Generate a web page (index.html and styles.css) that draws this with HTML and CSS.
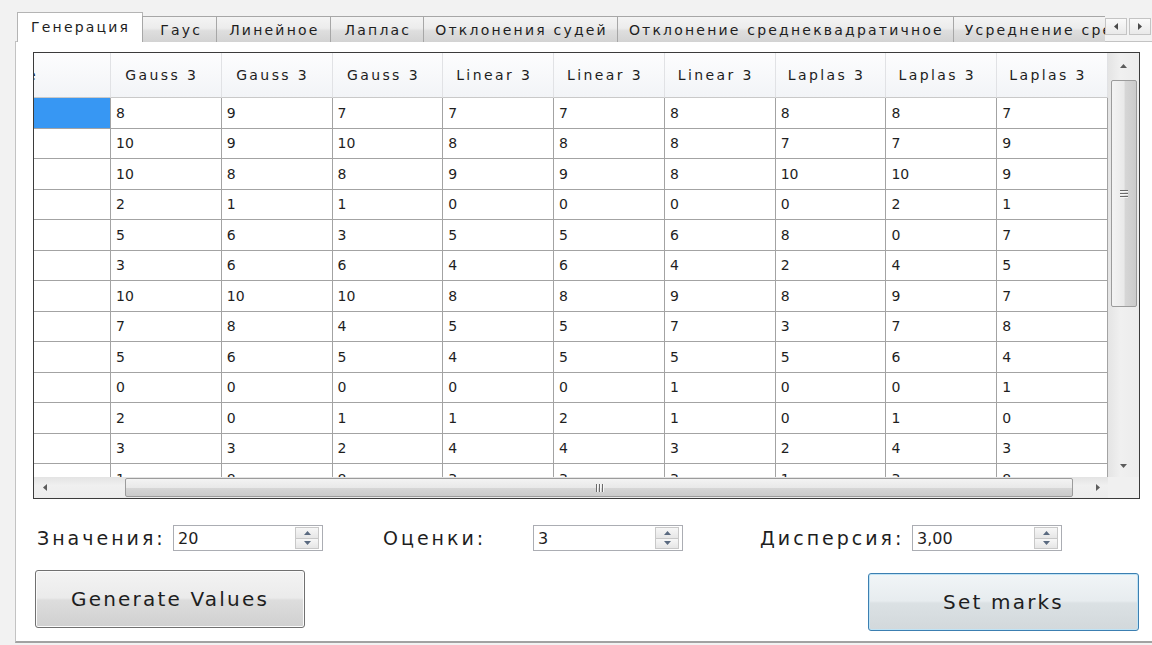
FILE: index.html
```html
<!DOCTYPE html>
<html lang="ru">
<head>
<meta charset="utf-8">
<title>Генерация оценок</title>
<link rel="stylesheet" href="styles.css">
</head>
<body>
<div class="window">
  <div class="tabbar">
    <div class="tabs">
      <div class="tab tab-active">Генерация</div>
      <div class="tab tab-pad-lg">Гаус</div>
      <div class="tab tab-pad-md">Линейное</div>
      <div class="tab tab-pad-sm">Лаплас</div>
      <div class="tab">Отклонения судей</div>
      <div class="tab">Отклонение среднеквадратичное</div>
      <div class="tab">Усреднение среднеквадратичное</div>
    </div>
    <div class="tab-scroll">
      <span class="tab-arrow"><svg width="4" height="7" viewBox="0 0 4 7"><path d="M4 0L0 3.5L4 7Z"/></svg></span>
      <span class="tab-arrow"><svg width="4" height="7" viewBox="0 0 4 7"><path d="M0 0L4 3.5L0 7Z"/></svg></span>
    </div>
  </div>

  <div class="panel">
    <div class="datagrid">
      <div class="sheet">
        <div class="sheet-grid">
          <div class="row">
            <div class="cell head head-corner"><span class="clipped">е</span></div>
            <div class="cell head">Gauss 3</div>
            <div class="cell head">Gauss 3</div>
            <div class="cell head">Gauss 3</div>
            <div class="cell head">Linear 3</div>
            <div class="cell head">Linear 3</div>
            <div class="cell head">Linear 3</div>
            <div class="cell head">Laplas 3</div>
            <div class="cell head">Laplas 3</div>
            <div class="cell head">Laplas 3</div>
          </div>
          <div class="row"><div class="cell rowhead rowhead-selected"></div><div class="cell">8</div><div class="cell">9</div><div class="cell">7</div><div class="cell">7</div><div class="cell">7</div><div class="cell">8</div><div class="cell">8</div><div class="cell">8</div><div class="cell">7</div></div>
          <div class="row"><div class="cell rowhead"></div><div class="cell">10</div><div class="cell">9</div><div class="cell">10</div><div class="cell">8</div><div class="cell">8</div><div class="cell">8</div><div class="cell">7</div><div class="cell">7</div><div class="cell">9</div></div>
          <div class="row"><div class="cell rowhead"></div><div class="cell">10</div><div class="cell">8</div><div class="cell">8</div><div class="cell">9</div><div class="cell">9</div><div class="cell">8</div><div class="cell">10</div><div class="cell">10</div><div class="cell">9</div></div>
          <div class="row"><div class="cell rowhead"></div><div class="cell">2</div><div class="cell">1</div><div class="cell">1</div><div class="cell">0</div><div class="cell">0</div><div class="cell">0</div><div class="cell">0</div><div class="cell">2</div><div class="cell">1</div></div>
          <div class="row"><div class="cell rowhead"></div><div class="cell">5</div><div class="cell">6</div><div class="cell">3</div><div class="cell">5</div><div class="cell">5</div><div class="cell">6</div><div class="cell">8</div><div class="cell">0</div><div class="cell">7</div></div>
          <div class="row"><div class="cell rowhead"></div><div class="cell">3</div><div class="cell">6</div><div class="cell">6</div><div class="cell">4</div><div class="cell">6</div><div class="cell">4</div><div class="cell">2</div><div class="cell">4</div><div class="cell">5</div></div>
          <div class="row"><div class="cell rowhead"></div><div class="cell">10</div><div class="cell">10</div><div class="cell">10</div><div class="cell">8</div><div class="cell">8</div><div class="cell">9</div><div class="cell">8</div><div class="cell">9</div><div class="cell">7</div></div>
          <div class="row"><div class="cell rowhead"></div><div class="cell">7</div><div class="cell">8</div><div class="cell">4</div><div class="cell">5</div><div class="cell">5</div><div class="cell">7</div><div class="cell">3</div><div class="cell">7</div><div class="cell">8</div></div>
          <div class="row"><div class="cell rowhead"></div><div class="cell">5</div><div class="cell">6</div><div class="cell">5</div><div class="cell">4</div><div class="cell">5</div><div class="cell">5</div><div class="cell">5</div><div class="cell">6</div><div class="cell">4</div></div>
          <div class="row"><div class="cell rowhead"></div><div class="cell">0</div><div class="cell">0</div><div class="cell">0</div><div class="cell">0</div><div class="cell">0</div><div class="cell">1</div><div class="cell">0</div><div class="cell">0</div><div class="cell">1</div></div>
          <div class="row"><div class="cell rowhead"></div><div class="cell">2</div><div class="cell">0</div><div class="cell">1</div><div class="cell">1</div><div class="cell">2</div><div class="cell">1</div><div class="cell">0</div><div class="cell">1</div><div class="cell">0</div></div>
          <div class="row"><div class="cell rowhead"></div><div class="cell">3</div><div class="cell">3</div><div class="cell">2</div><div class="cell">4</div><div class="cell">4</div><div class="cell">3</div><div class="cell">2</div><div class="cell">4</div><div class="cell">3</div></div>
          <div class="row"><div class="cell rowhead"></div><div class="cell">1</div><div class="cell">8</div><div class="cell">8</div><div class="cell">3</div><div class="cell">3</div><div class="cell">3</div><div class="cell">1</div><div class="cell">3</div><div class="cell">8</div></div>
        </div>
      </div>

      <div class="vscroll">
        <span class="sb-btn sb-btn-up"><svg width="7" height="4" viewBox="0 0 7 4"><path d="M0 4L3.5 0L7 4Z"/></svg></span>
        <div class="vtrack">
          <div class="vthumb"><span class="grip-h"></span><span class="grip-h"></span><span class="grip-h"></span></div>
        </div>
        <span class="sb-btn sb-btn-down"><svg width="7" height="4" viewBox="0 0 7 4"><path d="M0 0L7 0L3.5 4Z"/></svg></span>
      </div>

      <div class="hscroll">
        <span class="sb-btn sb-btn-side"><svg width="4" height="7" viewBox="0 0 4 7"><path d="M4 0L0 3.5L4 7Z"/></svg></span>
        <div class="htrack">
          <div class="hthumb"><span class="grip-v"></span><span class="grip-v"></span><span class="grip-v"></span></div>
        </div>
        <span class="sb-btn sb-btn-side"><svg width="4" height="7" viewBox="0 0 4 7"><path d="M0 0L4 3.5L0 7Z"/></svg></span>
      </div>

      <div class="sb-corner"></div>
    </div>

    <div class="params">
      <div class="field field-values">
        <span class="field-label">Значения:</span>
        <div class="spin"><span class="spin-value">20</span><span class="spin-btns"><span class="spin-step"><svg width="7" height="4" viewBox="0 0 7 4"><path d="M0 4L3.5 0L7 4Z"/></svg></span><span class="spin-step spin-step-down"><svg width="7" height="4" viewBox="0 0 7 4"><path d="M0 0L7 0L3.5 4Z"/></svg></span></span></div>
      </div>
      <div class="field field-marks">
        <span class="field-label">Оценки:</span>
        <div class="spin"><span class="spin-value">3</span><span class="spin-btns"><span class="spin-step"><svg width="7" height="4" viewBox="0 0 7 4"><path d="M0 4L3.5 0L7 4Z"/></svg></span><span class="spin-step spin-step-down"><svg width="7" height="4" viewBox="0 0 7 4"><path d="M0 0L7 0L3.5 4Z"/></svg></span></span></div>
      </div>
      <div class="field field-dispersion">
        <span class="field-label">Дисперсия:</span>
        <div class="spin"><span class="spin-value">3,00</span><span class="spin-btns"><span class="spin-step"><svg width="7" height="4" viewBox="0 0 7 4"><path d="M0 4L3.5 0L7 4Z"/></svg></span><span class="spin-step spin-step-down"><svg width="7" height="4" viewBox="0 0 7 4"><path d="M0 0L7 0L3.5 4Z"/></svg></span></span></div>
      </div>
    </div>

    <div class="actions">
      <button class="btn">Generate Values</button>
      <button class="btn btn-default">Set marks</button>
    </div>
  </div>
</div>
</body>
</html>
```

FILE: styles.css
```css
* {
  box-sizing: border-box;
}

html,
body {
  margin: 0;
}

body {
  width: 1152px;
  height: 645px;
  overflow: hidden;
  background: #f2f2f2;
  color: #1e1e1e;
  font-family: "DejaVu Sans", "Liberation Sans", sans-serif;
}

.window {
  padding-top: 12px;
}

/* ---------- tab strip ---------- */

.tabbar {
  position: relative;
  z-index: 1;
  display: flex;
  align-items: flex-start;
  height: 30px;
  margin-bottom: -1px;
  padding-left: 17px;
}

.tabs {
  display: flex;
  align-items: flex-end;
  width: 1088px;
  height: 30px;
  overflow: hidden;
}

.tab {
  flex: none;
  display: flex;
  align-items: center;
  justify-content: center;
  height: 26px;
  margin-left: -1px;
  padding: 0 9px 0 11px;
  border: 1px solid #a7a7a7;
  border-bottom: none;
  background: linear-gradient(#f4f4f4, #ececec 45%, #dedede 55%, #d3d3d3);
  font-size: 14px;
  letter-spacing: 2.2px;
  white-space: nowrap;
}

.tab-pad-lg {
  padding: 0 14px 0 17px;
}

.tab-pad-md {
  padding: 0 10px 0 12px;
}

.tab-pad-sm {
  padding: 0 12px 0 14px;
}

.tab-active {
  height: 30px;
  margin-left: 0;
  padding: 0 12px 2px 13px;
  border-color: #b4b4b4;
  background: #fff;
}

.tab-scroll {
  display: flex;
  gap: 2px;
  margin-top: 6px;
}

.tab-arrow {
  display: flex;
  align-items: center;
  justify-content: center;
  width: 22px;
  height: 17px;
  border: 1px solid #c4c4c4;
  background: linear-gradient(#fafafa, #e9e9e9);
}

.tab-arrow svg {
  fill: #4a4a4a;
}

/* ---------- page panel ---------- */

.panel {
  width: 1140px;
  height: 602px;
  margin-left: 15px;
  padding: 10px 0 0 17px;
  border: 1px solid #c3c3c3;
  border-bottom: 2px solid #a2a2a2;
  background: #fff;
}

/* ---------- data grid ---------- */

.datagrid {
  display: grid;
  grid-template-columns: 1074px 31px;
  grid-template-rows: 424px 21px;
  width: 1107px;
  height: 447px;
  border: 1px solid #3b3b3b;
  background: #fff;
}

.sheet {
  overflow: hidden;
}

.sheet-grid {
  display: grid;
  grid-template-columns: 77px repeat(9, 1fr);
  grid-template-rows: 45px;
  grid-auto-rows: 30.5px;
}

.row {
  display: contents;
}

.cell {
  display: flex;
  align-items: center;
  overflow: hidden;
  padding-left: 5px;
  border-right: 1px solid #a3a3a3;
  border-bottom: 1px solid #a3a3a3;
  font-size: 14px;
  white-space: nowrap;
}

.head {
  justify-content: center;
  padding: 0 8px 1px 0;
  border-right-color: #e1e2e5;
  border-bottom-color: #c9c9c9;
  background: linear-gradient(#fdfdfe, #f2f4f7);
  letter-spacing: 2.4px;
}

.head-corner {
  justify-content: flex-start;
  padding: 0 0 1px 0;
}

.clipped {
  margin-left: -7px;
}

.rowhead {
  background: #fff;
}

.rowhead-selected {
  background: #3797f3;
}

/* ---------- scroll bars ---------- */

.sb-btn {
  display: flex;
  align-items: center;
  justify-content: center;
  flex: none;
}

.sb-btn svg {
  fill: #5c5c5c;
}

.vscroll {
  display: flex;
  flex-direction: column;
  background: linear-gradient(90deg, #e4e4e4, #f0f0f0 40%, #ececec);
}

.sb-btn-up {
  height: 25px;
  padding-top: 1px;
}

.sb-btn-down {
  height: 23px;
}

.vtrack {
  flex: 1;
  padding: 2px 2px 0 3px;
}

.vthumb {
  display: flex;
  flex-direction: column;
  align-items: center;
  justify-content: center;
  gap: 2px;
  height: 227px;
  border: 1px solid #9b9b9b;
  border-radius: 2px;
  background: linear-gradient(90deg, #f3f3f3, #e9e9e9 50%, #d6d6d6 55%, #cbcbcb);
}

.grip-h {
  width: 8px;
  height: 1px;
  background: #6b6b6b;
  box-shadow: 0 1px 0 #f7f7f7;
}

.hscroll {
  display: flex;
  align-items: stretch;
  background: linear-gradient(#e3e3e3, #f0f0f0 40%, #ececec);
}

.sb-btn-side {
  width: 21px;
}

.htrack {
  flex: 1;
  padding: 1px 14px 1px 70px;
}

.hthumb {
  display: flex;
  align-items: center;
  justify-content: center;
  gap: 2px;
  height: 100%;
  border: 1px solid #9b9b9b;
  border-radius: 2px;
  background: linear-gradient(#f3f3f3, #e9e9e9 50%, #d6d6d6 55%, #cbcbcb);
}

.grip-v {
  width: 1px;
  height: 8px;
  background: #6b6b6b;
  box-shadow: 1px 0 0 #f7f7f7;
}

.sb-corner {
  background: #f0f0f0;
}

/* ---------- parameter fields ---------- */

.params {
  display: flex;
  align-items: center;
  height: 26px;
  margin-top: 26px;
  padding-left: 4px;
}

.field {
  display: flex;
  align-items: center;
}

.field-label {
  font-size: 19px;
  letter-spacing: 3px;
  white-space: nowrap;
}

.field-values .field-label {
  width: 136px;
}

.field-marks {
  margin-left: 60px;
}

.field-marks .field-label {
  width: 150px;
}

.field-dispersion {
  margin-left: 77px;
}

.field-dispersion .field-label {
  width: 152px;
}

.spin {
  display: flex;
  align-items: center;
  justify-content: space-between;
  width: 150px;
  height: 26px;
  padding: 0 3px 0 4px;
  border: 1px solid #abadb3;
  background: #fff;
}

.spin-value {
  font-size: 16px;
}

.spin-btns {
  display: flex;
  flex-direction: column;
  width: 24px;
  height: 22px;
  border: 1px solid #c8c8c8;
}

.spin-step {
  display: flex;
  flex: 1;
  align-items: center;
  justify-content: center;
  background: linear-gradient(#f7f7f7, #e6e6e6);
}

.spin-step-down {
  border-top: 1px solid #c8c8c8;
}

.spin-step svg {
  fill: #5a6a80;
}

/* ---------- command buttons ---------- */

.actions {
  display: flex;
  justify-content: space-between;
  align-items: flex-start;
  width: 1107px;
  margin-top: 19px;
  padding: 0 1px 0 2px;
}

.btn {
  width: 270px;
  height: 58px;
  padding: 0;
  border: 1px solid #707070;
  border-radius: 3px;
  background: linear-gradient(#f3f3f3, #ebebeb 48%, #dddddd 52%, #d0d0d0);
  box-shadow: inset 0 0 0 1px #fbfbfb;
  color: #1e1e1e;
  font-family: "DejaVu Sans", "Liberation Sans", sans-serif;
  font-size: 20px;
  letter-spacing: 2.2px;
}

.btn-default {
  width: 271px;
  margin-top: 3px;
  border-color: #3c7fb1;
  background: linear-gradient(#f1f5f7, #e7ecef 48%, #dbe1e4 52%, #d2d8db);
  box-shadow: inset 0 0 0 1px #bfe3f5;
}
```
